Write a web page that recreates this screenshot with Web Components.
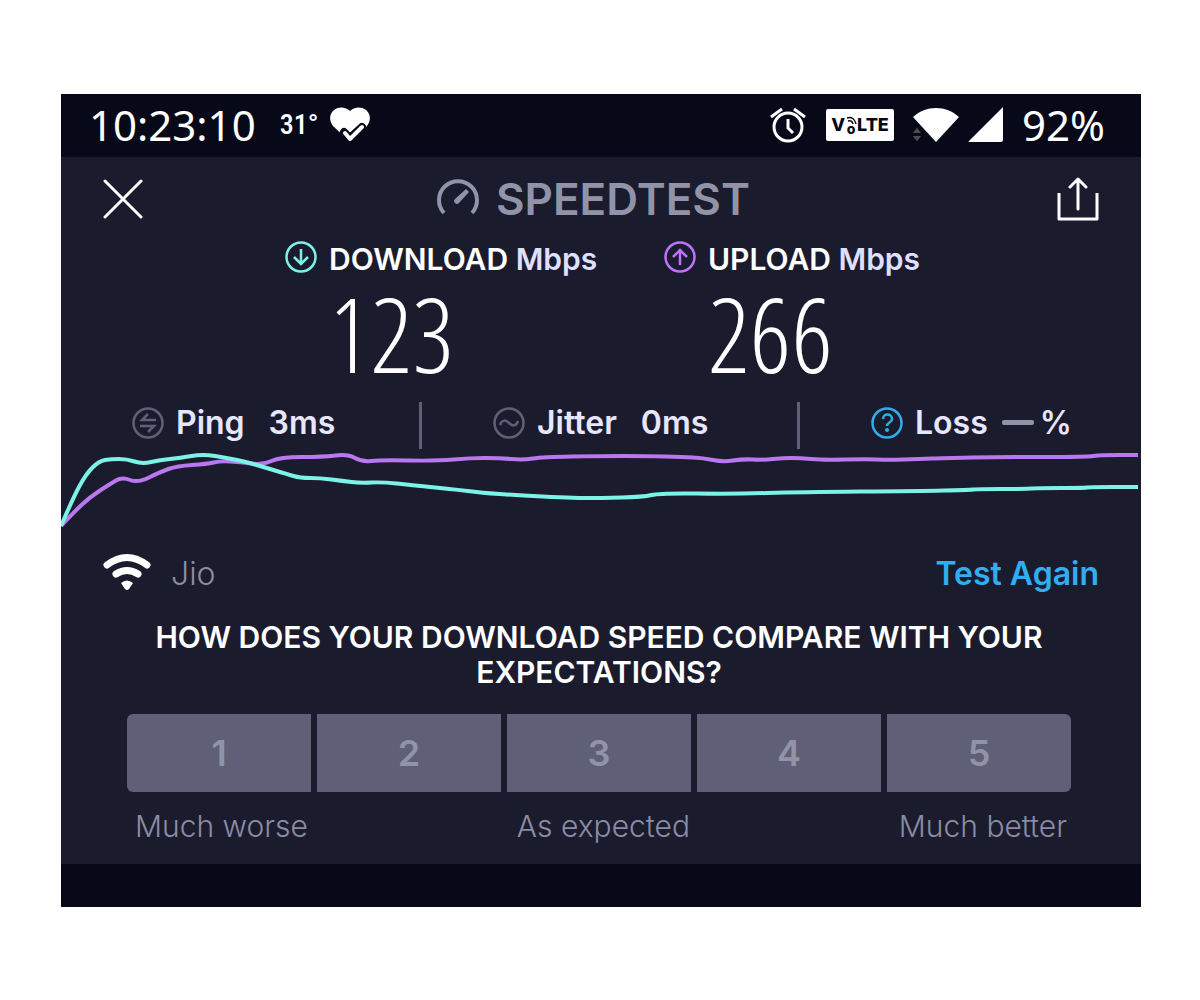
<!DOCTYPE html>
<html lang="en">
<head>
<meta charset="utf-8">
<meta name="viewport" content="width=device-width, initial-scale=1">
<title>Speedtest</title>
<style>
  body { margin: 0; padding: 94px 59px 93px 61px; background: #fff; font-family: Inter, "Liberation Sans", sans-serif; }
</style>
</head>
<body>
<speed-app></speed-app>

<script>
(function () {
  // name -> [width, height, markup]
  var ICONS = {
    heart: [40, 36, '<path fill="#fff" d="M20 35 3 19C-1 14-1 7 4 3c5-4 12-3 16 1 4-4 11-5 16-1 5 4 5 11 1 16z"/><path d="M14 25l6 6 12-11" fill="none" stroke="#070919" stroke-width="8" stroke-linecap="round" stroke-linejoin="round"/><path d="M15 26l5 6 12-12" fill="none" stroke="#fff" stroke-width="4" stroke-linecap="round" stroke-linejoin="round"/>'],
    alarm: [36, 36, '<g fill="none" stroke="#fff" stroke-width="3"><circle cx="18" cy="20" r="14"/><path d="M1 10 12 2M24 2l11 8M18 12v9l5 5"/></g>'],
    wifiFull: [48, 36, '<path fill="#fff" d="M1 10C14-2 34-2 47 10L24 35z"/><path fill="#4a4a50" stroke="#070919" d="M0 26.500l5-6.500 5 6.500zM0 28.500h10l-5 6.500z"/>'],
    signal: [36, 36, '<path fill="#fff" d="M35 0v33q0 2-2 2H1q-1 0 0-1z"/>'],
    close: [40, 40, '<path d="M2 2l36 36M38 2 2 38" stroke="#fff" stroke-width="3" stroke-linecap="round"/>'],
    gauge: [44, 44, '<path d="M8 36A19 19 0 1 1 36 36" fill="none" stroke="#9193a9" stroke-width="4"/><path fill="#9193a9" d="M30 12l3 3-10 11q-2 2-4 0-2-2 0-4z"/>'],
    share: [42, 44, '<g fill="none" stroke="#fff" stroke-width="3"><path d="M2 16v26h38V16" stroke-linejoin="round"/><path d="M21 32V3M13 10l8-8 8 8" stroke-linecap="round" stroke-linejoin="round"/></g>'],
    down: [32, 32, '<g fill="none" stroke="#7df3e8" stroke-width="2.500"><circle cx="16" cy="16" r="14.500"/><path d="M16 8v15M9 16l7 7 7-7"/></g>'],
    up: [32, 32, '<g fill="none" stroke="#bf71ff" stroke-width="2.500"><circle cx="16" cy="16" r="14.500"/><path d="M16 24V9M9 16l7-7 7 7"/></g>'],
    ping: [32, 32, '<g fill="none" stroke="#5f6077" stroke-width="2.500"><circle cx="16" cy="16" r="14.500"/><path d="M24 13H10l6-6M8 19h14l-6 6"/></g>'],
    jitter: [32, 32, '<g fill="none" stroke="#5f6077" stroke-width="2.500"><circle cx="16" cy="16" r="14.500"/><path d="M7 18c2-6 6-5 9-2s7 4 9-2"/></g>'],
    loss: [32, 32, '<g fill="none" stroke="#2faee8" stroke-width="2.500"><circle cx="16" cy="16" r="14.500"/><path d="M12 12c0-6 9-6 9 0 0 4-5 3-5 7"/></g><circle cx="16" cy="23" r="2" fill="#2faee8"/>'],
    wifi: [48, 42, '<g fill="none" stroke="#fff" stroke-width="7" stroke-linecap="round"><path d="M4 12Q24-3 44 12M13 21q11-7 22 0"/></g><path fill="#fff" d="M18 30q6-5 12 0l-4 6q-2 2-4 0z"/>'],
    volteWave: [12, 8, '<g fill="none" stroke="#070919" stroke-width="1.500"><path d="M2 2q7-2 9 6M3 5q4-1 5 3"/></g>']
  };

  function attach(el, css, html) {
    var root = el.attachShadow({ mode: 'open' });
    root.innerHTML = '<style>' + css + '</style>' + html;
    return root;
  }

  class SpeedIcon extends HTMLElement {
    connectedCallback() {
      if (this.shadowRoot) return;
      var ic = ICONS[this.getAttribute('name')];
      attach(this, ':host{display:block;flex:none;}svg{display:block;}',
        '<svg aria-hidden="true" width="' + ic[0] + '" height="' + ic[1] + '" viewBox="0 0 ' + ic[0] + ' ' + ic[1] + '">' + ic[2] + '</svg>');
    }
  }

  class StatusBar extends HTMLElement {
    constructor() {
      super();
      attach(this, [
        ':host{display:flex;align-items:center;justify-content:space-between;height:63px;box-sizing:border-box;padding:0 36px 2px 28px;background:#070919;color:#fff;font-family:"Noto Sans",sans-serif;}',
        '.side{display:flex;align-items:center;}',
        '.big{font-size:42px;line-height:56px;font-weight:400;}',
        '.temp{margin:0 12px 0 24px;font:500 28px/32px "Roboto Condensed",Roboto,sans-serif;}',
        '.right{gap:8px;}',
        '.volte{display:flex;align-items:center;justify-content:center;box-sizing:border-box;width:68px;height:32px;margin:0 10px 0 12px;border-radius:2px;background:#fff;color:#070919;font:800 18px/32px Inter,sans-serif;}',
        '.o{display:grid;justify-items:center;font-size:14px;line-height:10px;}',
        '.right .big{margin-left:10px;}'
      ].join(''), [
        '<div class="side"><span class="big">10:23:10</span><span class="temp">31°</span><speed-icon name="heart"></speed-icon></div>',
        '<div class="side right"><speed-icon name="alarm"></speed-icon>',
        '<span class="volte">V<span class="o"><speed-icon name="volteWave"></speed-icon>o</span>LTE</span>',
        '<speed-icon name="wifiFull"></speed-icon><speed-icon name="signal"></speed-icon><span class="big">92%</span></div>'
      ].join(''));
    }
  }

  class AppHeader extends HTMLElement {
    constructor() {
      super();
      attach(this, [
        ':host{display:flex;align-items:center;justify-content:space-between;height:84px;padding:0 42px;}',
        'button{padding:0;border:0;background:none;}',
        '.logo{display:flex;align-items:center;gap:16px;padding-right:14px;color:#9193a9;font-size:44px;line-height:48px;font-weight:600;}'
      ].join(''), [
        '<button aria-label="Close"><speed-icon name="close"></speed-icon></button>',
        '<div class="logo"><speed-icon name="gauge"></speed-icon><span><slot></slot></span></div>',
        '<button aria-label="Share"><speed-icon name="share"></speed-icon></button>'
      ].join(''));
    }
  }

  class SpeedResult extends HTMLElement {
    connectedCallback() {
      if (this.shadowRoot) return;
      attach(this, [
        ':host{display:block;}',
        '.head{display:flex;align-items:center;gap:12px;height:32px;font-size:30px;line-height:32px;font-weight:600;color:#fff;white-space:nowrap;}',
        '.head > span{padding-top:3px;}',
        '.unit{color:#dfdfff;}',
        '.value{padding:0 0 8px 44px;font:200 104px/120px "Open Sans Condensed Light","Roboto Condensed",Roboto,sans-serif;color:#fff;}'
      ].join(''), [
        '<div class="head"><speed-icon name="' + this.getAttribute('icon') + '"></speed-icon>',
        '<span>' + this.getAttribute('label') + ' <span class="unit">Mbps</span></span></div>',
        '<div class="value"><slot></slot></div>'
      ].join(''));
    }
  }

  class SpeedStat extends HTMLElement {
    connectedCallback() {
      if (this.shadowRoot) return;
      attach(this, [
        ':host{display:flex;align-items:center;gap:12px;height:41px;padding:0 0 6px 71px;font-size:32px;line-height:40px;font-weight:600;color:#e6e6ff;white-space:nowrap;}',
        ':host(:not(:last-child)){border-right:3px solid #5f6077;}',
        '.value{display:flex;align-items:center;gap:6px;margin-left:' + (this.hasAttribute('tight') ? 2 : 12) + 'px;}'
      ].join(''),
        '<speed-icon name="' + this.getAttribute('icon') + '"></speed-icon><span>' + this.getAttribute('label') + '</span><span class="value"><slot></slot></span>');
    }
  }

  class SpeedChart extends HTMLElement {
    constructor() {
      super();
      attach(this, ':host{display:block;}svg{display:block;width:100%;height:78px;}path{fill:none;stroke-width:4;vector-effect:non-scaling-stroke;}',
        '<svg viewBox="0 0 1080 78" preserveAspectRatio="none" role="img" aria-label="Download and upload speed over time">' +
        '<path stroke="#b978f0" d="' + this._path(SpeedChart.upload) + '"/><path stroke="#7df3e8" d="' + this._path(SpeedChart.download) + '"/></svg>');
    }

    // curves through the midpoints, each point is a control point
    _path(pts) {
      var d = 'M' + pts[0];
      for (var i = 1; i < pts.length - 1; i++) {
        var mx = (pts[i][0] + pts[i + 1][0]) / 2;
        var my = (pts[i][1] + pts[i + 1][1]) / 2;
        d += 'Q' + pts[i] + ' ' + mx + ',' + my;
      }
      return d + 'L' + pts[pts.length - 1];
    }
  }
  SpeedChart.download = [[0, 76], [12, 48], [25, 24], [38, 11], [50, 9], [66, 9], [81, 14], [99, 10], [119, 8], [142, 4], [166, 8], [186, 12], [202, 17], [226, 24], [239, 28], [259, 28], [282, 31], [299, 33], [322, 32], [349, 35], [399, 40], [432, 44], [512, 48], [539, 48], [582, 47], [599, 43], [672, 44], [739, 42], [859, 41], [906, 40], [919, 39], [962, 39], [976, 38], [1024, 38], [1027, 37], [1077, 37]];
  SpeedChart.upload = [[0, 76], [12, 63], [29, 47], [49, 34], [61, 27], [77, 33], [99, 22], [116, 16], [146, 14], [159, 11], [179, 12], [202, 15], [219, 7], [262, 7], [287, 4], [301, 12], [319, 10], [376, 11], [409, 8], [439, 8], [462, 10], [482, 7], [539, 6], [586, 6], [622, 7], [642, 8], [662, 12], [682, 9], [702, 10], [722, 8], [739, 8], [762, 10], [806, 9], [826, 10], [859, 9], [882, 8], [939, 7], [1026, 7], [1039, 5], [1077, 5]];

  class RatingScale extends HTMLElement {
    constructor() {
      super();
      var buttons = '';
      for (var i = 1; i <= 5; i++) buttons += '<button>' + i + '</button>';
      attach(this, [
        ':host{display:block;padding:0 70px 0 66px;}',
        'h2{margin:0 0 24px;font-size:30px;line-height:35px;font-weight:600;text-align:center;color:#fff;}',
        '.row{display:grid;grid-template-columns:repeat(5,1fr);gap:6px;}',
        'button{height:78px;padding:0;border:0;background:#5f6077;color:#9193a9;font:600 36px/40px Inter,sans-serif;}',
        'button:first-child{border-radius:6px 0 0 6px;}button:last-child{border-radius:0 6px 6px 0;}',
        '.labels{display:flex;justify-content:space-between;padding:14px 4px 18px 8px;font-size:30px;line-height:40px;font-weight:300;color:#8b8ca3;}'
      ].join(''), [
        '<h2><slot></slot></h2><div class="row">' + buttons + '</div>',
        '<div class="labels"><span>Much worse</span><span>As expected</span><span>Much better</span></div>'
      ].join(''));
    }
  }

  class SpeedApp extends HTMLElement {
    constructor() {
      super();
      attach(this, [
        ':host{display:block;background:#1b1b2e;}',
        '.results{display:grid;grid-template-columns:314px 253px;gap:65px;justify-content:center;}',
        '.stats{display:grid;grid-template-columns:361fr 378fr 341fr;margin:1px 0;}',
        '.dash{width:32px;height:5px;border-radius:2px;background:#9193a9;}',
        '.network{display:flex;align-items:center;height:92px;padding:0 42px;font-size:32px;line-height:40px;}',
        '.isp{margin-left:20px;font-weight:300;color:#8b8ca3;}',
        'a{margin-left:auto;color:#2faef2;font-weight:600;text-decoration:none;}',
        'footer{height:43px;background:#070919;}'
      ].join(''), [
        '<status-bar></status-bar>',
        '<main><app-header>SPEEDTEST</app-header>',
        '<div class="results"><speed-result icon="down" label="DOWNLOAD">123</speed-result><speed-result icon="up" label="UPLOAD">266</speed-result></div>',
        '<div class="stats"><speed-stat icon="ping" label="Ping">3ms</speed-stat><speed-stat icon="jitter" label="Jitter">0ms</speed-stat>',
        '<speed-stat icon="loss" label="Loss" tight><span class="dash"></span>%</speed-stat></div>',
        '<speed-chart></speed-chart>',
        '<div class="network"><speed-icon name="wifi"></speed-icon><span class="isp">Jio</span><a href="#again">Test Again</a></div>',
        '<rating-scale>HOW DOES YOUR DOWNLOAD SPEED COMPARE WITH YOUR EXPECTATIONS?</rating-scale></main>',
        '<footer></footer>'
      ].join(''));
    }
  }

  customElements.define('speed-icon', SpeedIcon);
  customElements.define('status-bar', StatusBar);
  customElements.define('app-header', AppHeader);
  customElements.define('speed-result', SpeedResult);
  customElements.define('speed-stat', SpeedStat);
  customElements.define('speed-chart', SpeedChart);
  customElements.define('rating-scale', RatingScale);
  customElements.define('speed-app', SpeedApp);
})();
</script>
</body>
</html>
